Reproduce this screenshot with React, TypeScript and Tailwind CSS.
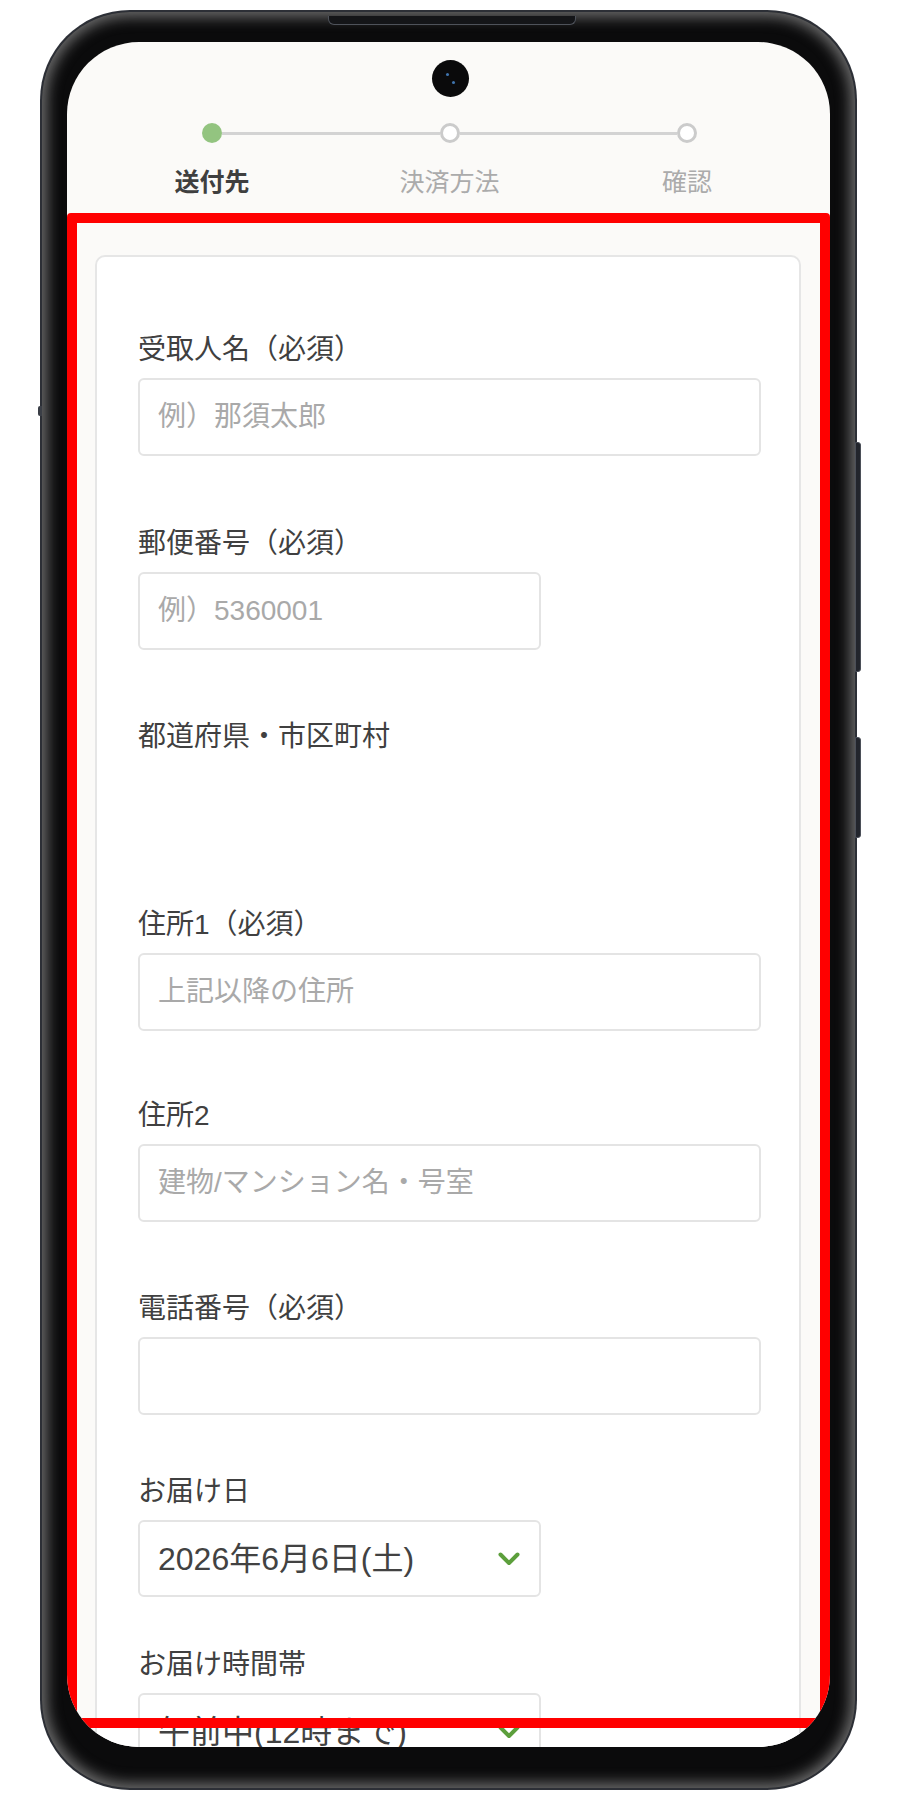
import type { ReactNode } from 'react'

type Step = { label: string; active: boolean }

const steps: Step[] = [
  { label: '送付先', active: true },
  { label: '決済方法', active: false },
  { label: '確認', active: false }
]

function Dot({ active }: { active: boolean }) {
  return active ? (
    <span className="block h-[20px] w-[20px] shrink-0 rounded-full bg-[#93c480]" />
  ) : (
    <span className="block h-[20px] w-[20px] shrink-0 rounded-full border-[3px] border-[#cbcbcb] bg-white" />
  )
}

function Stepper() {
  return (
    <div className="ml-[85px] mt-[81px] flex w-[595px] flex-col">
      <div className="mx-[50px] flex items-center">
        {steps.map((s, i) => (
          <div key={s.label} className={i === 0 ? 'flex items-center' : 'flex flex-1 items-center'}>
            {i > 0 && <span className="h-[3px] flex-1 bg-[#d3d3d3]" />}
            <Dot active={s.active} />
          </div>
        ))}
      </div>
      <div className="mt-[24px] flex justify-between">
        {steps.map((s) => (
          <span
            key={s.label}
            className={
              s.active
                ? 'w-[120px] text-center text-[25px] font-bold leading-[30px] text-[#3f3f3f]'
                : 'w-[120px] text-center text-[25px] leading-[30px] text-[#ababab]'
            }
          >
            {s.label}
          </span>
        ))}
      </div>
    </div>
  )
}

function Field({
  label,
  className = '',
  children
}: {
  label: string
  className?: string
  children: ReactNode
}) {
  return (
    <div className={className}>
      <div className="h-[34px] text-[28px] leading-[34px] text-[#404040]">{label}</div>
      <div className="mt-[11px]">{children}</div>
    </div>
  )
}

function TextBox({ placeholder = '', short = false }: { placeholder?: string; short?: boolean }) {
  return (
    <input
      readOnly
      placeholder={placeholder}
      className={
        (short ? 'w-[403px] ' : 'w-full ') +
        'block h-[78px] rounded-[6px] border-2 border-[#e4e4e4] bg-white px-[18px] text-[28px] text-[#444] outline-none placeholder:text-[#a9a9a9]'
      }
    />
  )
}

function Chevron() {
  return (
    <svg width="22" height="14" viewBox="0 0 22 14" fill="none">
      <polyline
        points="2.5,2.5 11,11 19.5,2.5"
        stroke="#5c9f3c"
        strokeWidth="4"
        strokeLinecap="round"
        strokeLinejoin="round"
      />
    </svg>
  )
}

function SelectBox({ value }: { value: string }) {
  return (
    <div className="flex h-[77px] w-[403px] items-center justify-between rounded-[6px] border-2 border-[#e4e4e4] bg-white pl-[18px] pr-[19px]">
      <span className="text-[32px] leading-none text-[#424242]">{value}</span>
      <Chevron />
    </div>
  )
}

function ShippingForm() {
  return (
    <div className="ml-[28px] mr-[29px] mt-[58px] rounded-[10px] border-2 border-[#e6e6e6] bg-white pb-[80px] pl-[41px] pr-[38px] pt-[76px]">
      <Field label="受取人名（必須）">
        <TextBox placeholder="例）那須太郎" />
      </Field>
      <Field label="郵便番号（必須）" className="mt-[71px]">
        <TextBox placeholder="例）5360001" short />
      </Field>
      <Field label="都道府県・市区町村" className="mt-[70px]">
        <div className="h-[78px]" />
      </Field>
      <Field label="住所1（必須）" className="mt-[65px]">
        <TextBox placeholder="上記以降の住所" />
      </Field>
      <Field label="住所2" className="mt-[68px]">
        <TextBox placeholder="建物/マンション名・号室" />
      </Field>
      <Field label="電話番号（必須）" className="mt-[70px]">
        <TextBox />
      </Field>
      <Field label="お届け日" className="mt-[60px]">
        <SelectBox value="2026年6月6日(土)" />
      </Field>
      <Field label="お届け時間帯" className="mt-[51px]">
        <SelectBox value="午前中(12時まで)" />
      </Field>
    </div>
  )
}

export default function App() {
  return (
    <div className="h-[1800px] w-[900px] bg-white pl-[40px] pt-[10px] font-['Liberation_Sans','Noto_Sans_CJK_JP',sans-serif]">
      <div className="relative h-[1780px] w-[817px]">
        {/* side keys */}
        <div className="absolute right-[-4px] top-[432px] h-[230px] w-[6px] rounded-r-[3px] border border-[#4b4f58] bg-[#22252c]" />
        <div className="absolute right-[-4px] top-[727px] h-[101px] w-[6px] rounded-r-[3px] border border-[#4b4f58] bg-[#22252c]" />
        <div className="absolute left-[-2px] top-[396px] h-[10px] w-[4px] rounded-l-[2px] bg-[#3a3e46]" />

        <div className="h-full rounded-[90px] bg-[#2c2f36] p-[2px]">
          <div className="relative flex h-full flex-col rounded-[88px] bg-[#0b0b0c] px-[25px] pb-[41px] pt-[30px] shadow-[inset_0_0_14px_5px_rgba(150,150,150,0.7)]">
            {/* earpiece slit */}
            <div className="absolute left-[286px] top-[4px] h-[9px] w-[248px] rounded-b-[6px] border border-t-0 border-[#4e525a] bg-[#141518]" />

            <div className="relative flex-1 overflow-hidden rounded-[72px] bg-[#fbfaf8]">
              <div className="absolute left-[365px] top-[18px] h-[37px] w-[37px] rounded-full bg-[#0a0a0b]">
                <span className="absolute left-[14px] top-[13px] h-[3px] w-[3px] rounded-full bg-[#3f74ad]" />
                <span className="absolute left-[20px] top-[21px] h-[3px] w-[3px] rounded-full bg-[#3f74ad]" />
              </div>

              <Stepper />
              <ShippingForm />

              {/* highlight frame around the form */}
              <div className="pointer-events-none absolute left-0 right-0 top-[171px] h-[1515px] rounded-[4px] border-[10px] border-[#ff0000]" />
            </div>
          </div>
        </div>
      </div>
    </div>
  )
}
